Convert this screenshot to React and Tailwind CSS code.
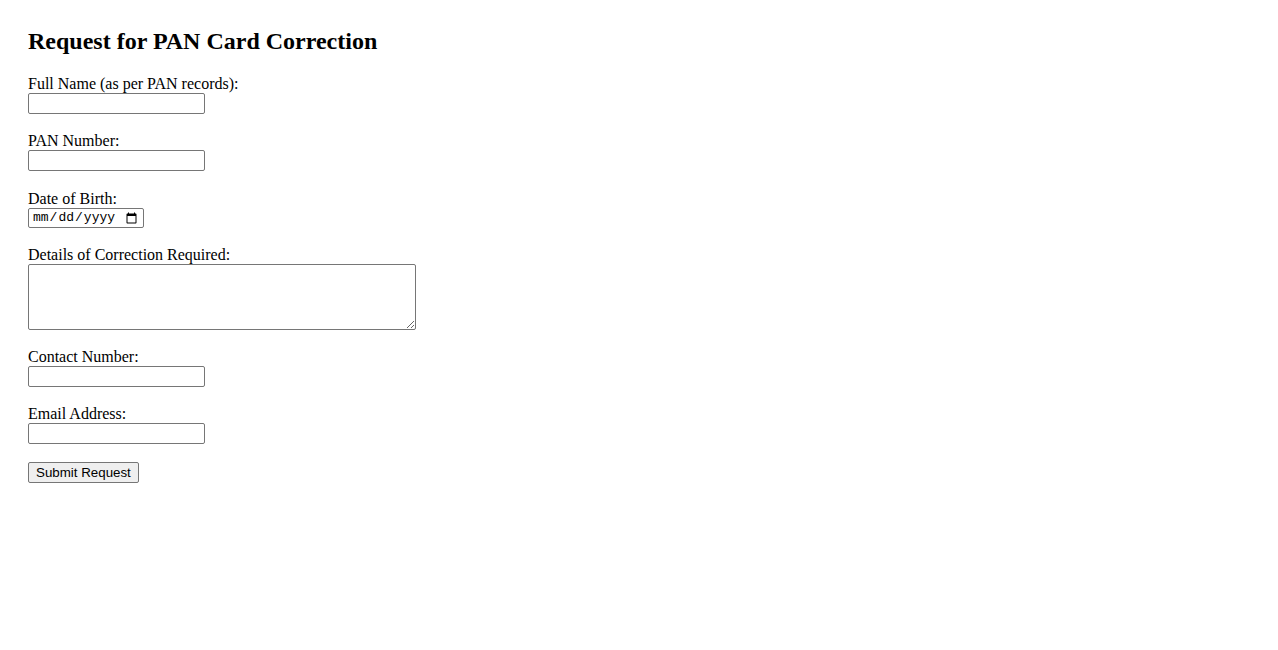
import React from 'react';

// Plain browser-default looking form
const fields = [
  { id: 'name', label: 'Full Name (as per PAN records):', type: 'text', gap: 'mb-[18px]' },
  { id: 'pan', label: 'PAN Number:', type: 'text', gap: 'mb-[19px]' },
  { id: 'dob', label: 'Date of Birth:', type: 'date', gap: 'mb-[18px]' },
  { id: 'details', label: 'Details of Correction Required:', type: 'textarea', gap: 'mb-[18px]' },
  { id: 'contact', label: 'Contact Number:', type: 'tel', gap: 'mb-[18px]' },
  { id: 'email', label: 'Email Address:', type: 'email', gap: 'mb-[18px]' },
];

function Field({ field }) {
  const base = 'block bg-white border border-[#767676] rounded-[2px] outline-none';
  let control;
  if (field.type === 'textarea') {
    control = <textarea id={field.id} className={`${base} w-[388px] h-[66px] resize`} />;
  } else if (field.type === 'date') {
    control = (
      <input
        id={field.id}
        type="date"
        className={`${base} w-[116px] h-[20px] px-[3px] text-[13px] leading-[16px] font-['Liberation_Mono',monospace]`}
      />
    );
  } else {
    control = <input id={field.id} type={field.type} className={`${base} w-[177px] h-[21px] px-[2px] text-[13px]`} />;
  }
  return (
    <div className={`flex flex-col items-start ${field.gap}`}>
      <label htmlFor={field.id} className="block text-[16px] leading-[18px]">{field.label}</label>
      {control}
    </div>
  );
}

export default function App() {
  return (
    <div className="min-h-screen bg-white text-black font-['Liberation_Serif','Times_New_Roman',serif] px-[28px] pt-[28px]">
      <h2 className="text-[24px] font-bold leading-[27px] mb-[20px]">Request for PAN Card Correction</h2>
      <form onSubmit={e => e.preventDefault()}>
        {fields.map(f => <Field key={f.id} field={f} />)}
        <button
          type="submit"
          className="block h-[21px] px-[7px] bg-[#efefef] border border-[#767676] rounded-[2px] text-[13.33px] leading-[15px] font-['Liberation_Sans',Arial,sans-serif]"
        >
          Submit Request
        </button>
      </form>
    </div>
  );
}
